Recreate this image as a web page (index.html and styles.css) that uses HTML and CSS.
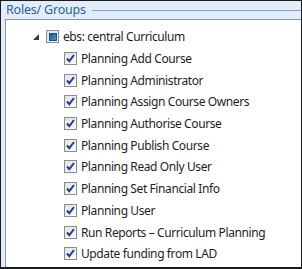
FILE: index.html
```html
<!DOCTYPE html>
<html>
<head>
  <meta charset="UTF-8">
  <title>Roles/ Groups</title>
  <link rel="stylesheet" href="styles.css">
</head>
<body>
  <div class="frame">
    <div class="groupHead">
      <span class="groupTitle">Roles/ Groups</span>
      <span class="groupLine"></span>
    </div>
    <div class="panel">
      <div class="row root">
        <svg class="expander" width="7" height="7" viewBox="0 0 7 7"><polygon points="6,0 6,6 0,6" fill="#3c3c3c"/></svg>
        <span class="box partial"><span class="fill"></span></span>
        <span class="label">ebs: central Curriculum</span>
      </div>
      <div class="row child"><span class="box"><svg width="9" height="9" viewBox="0 0 9 9"><path d="M1 4.5 L3.3 7.2 L8 1" fill="none" stroke="#1f3aa0" stroke-width="2"/></svg></span><span class="label">Planning Add Course</span></div>
      <div class="row child"><span class="box"><svg width="9" height="9" viewBox="0 0 9 9"><path d="M1 4.5 L3.3 7.2 L8 1" fill="none" stroke="#1f3aa0" stroke-width="2"/></svg></span><span class="label">Planning Administrator</span></div>
      <div class="row child"><span class="box"><svg width="9" height="9" viewBox="0 0 9 9"><path d="M1 4.5 L3.3 7.2 L8 1" fill="none" stroke="#1f3aa0" stroke-width="2"/></svg></span><span class="label">Planning Assign Course Owners</span></div>
      <div class="row child"><span class="box"><svg width="9" height="9" viewBox="0 0 9 9"><path d="M1 4.5 L3.3 7.2 L8 1" fill="none" stroke="#1f3aa0" stroke-width="2"/></svg></span><span class="label">Planning Authorise Course</span></div>
      <div class="row child"><span class="box"><svg width="9" height="9" viewBox="0 0 9 9"><path d="M1 4.5 L3.3 7.2 L8 1" fill="none" stroke="#1f3aa0" stroke-width="2"/></svg></span><span class="label">Planning Publish Course</span></div>
      <div class="row child"><span class="box"><svg width="9" height="9" viewBox="0 0 9 9"><path d="M1 4.5 L3.3 7.2 L8 1" fill="none" stroke="#1f3aa0" stroke-width="2"/></svg></span><span class="label">Planning Read Only User</span></div>
      <div class="row child"><span class="box"><svg width="9" height="9" viewBox="0 0 9 9"><path d="M1 4.5 L3.3 7.2 L8 1" fill="none" stroke="#1f3aa0" stroke-width="2"/></svg></span><span class="label">Planning Set Financial Info</span></div>
      <div class="row child"><span class="box"><svg width="9" height="9" viewBox="0 0 9 9"><path d="M1 4.5 L3.3 7.2 L8 1" fill="none" stroke="#1f3aa0" stroke-width="2"/></svg></span><span class="label">Planning User</span></div>
      <div class="row child"><span class="box"><svg width="9" height="9" viewBox="0 0 9 9"><path d="M1 4.5 L3.3 7.2 L8 1" fill="none" stroke="#1f3aa0" stroke-width="2"/></svg></span><span class="label">Run Reports – Curriculum Planning</span></div>
      <div class="row child"><span class="box"><svg width="9" height="9" viewBox="0 0 9 9"><path d="M1 4.5 L3.3 7.2 L8 1" fill="none" stroke="#1f3aa0" stroke-width="2"/></svg></span><span class="label">Update funding from LAD</span></div>
    </div>
  </div>
</body>
</html>
```

FILE: styles.css
```css
body {
    margin: 0;
    font-family: "Noto Sans", "Open Sans", sans-serif;
    font-size: 12px;
    color: #1e1e1e;
}

.frame {
    width: 302px;
    height: 269px;
    box-sizing: border-box;
    border: 1px solid #1c1c1c;
    border-bottom-width: 2px;
    background: #e3edfa;
    display: flex;
    flex-direction: column;
}

.groupHead {
    display: flex;
    align-items: center;
    height: 18px;
    padding-left: 5px;
}

.groupTitle {
    color: #2a5ea6;
    font-size: 12.5px;
    line-height: 18px;
    letter-spacing: -0.2px;
}

.groupLine {
    flex: 1;
    border-top: 1px solid #7ca5dc;
    margin-left: 6px;
    margin-top: 1px;
}

.panel {
    flex: 1;
    margin-left: 4px;
    background: #fff;
    border-left: 1px solid #8895a8;
    border-top: 1px solid #8895a8;
    padding-top: 6px;
}

.row {
    display: flex;
    align-items: center;
    height: 21.7px;
}

.label {
    letter-spacing: -0.4px;
}

.root {
    padding-left: 27px;
}

.child {
    padding-left: 58px;
}

.expander {
    margin-right: 6px;
    margin-top: 1px;
}

.box {
    width: 11px;
    height: 11px;
    border: 1px solid #8c8c8c;
    background: linear-gradient(135deg, #e2e2e2, #fbfbfb);
    display: flex;
    align-items: center;
    justify-content: center;
    margin-right: 4px;
}

.partial .fill {
    width: 8px;
    height: 8px;
    background: linear-gradient(135deg, #0f5aa8, #3f9ad8);
    border: 1px solid #1a4f8a;
    box-sizing: border-box;
}

.root .box {
    width: 11px;
    height: 11px;
}
```
